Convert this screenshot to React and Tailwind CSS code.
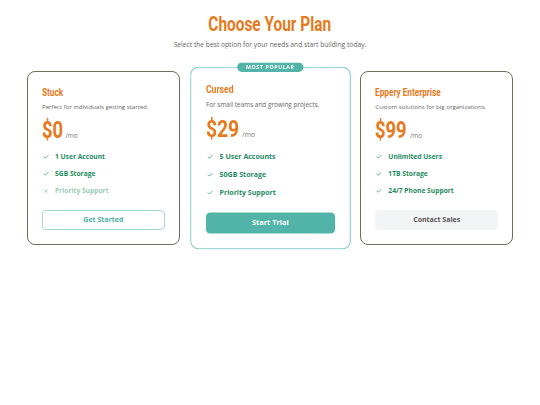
import React from "react";

const cond = { fontFamily: 'Roboto, "Liberation Sans", sans-serif' };

function Check() {
  return (
    <svg width="6" height="6" viewBox="0 0 24 24" fill="none" stroke="#2f9a72" strokeWidth="3" strokeLinecap="round" strokeLinejoin="round" className="shrink-0">
      <path d="M20 6 9 17l-5-5" />
    </svg>
  );
}

function Cross() {
  return (
    <svg width="6" height="6" viewBox="0 0 24 24" fill="none" stroke="#9fc9b8" strokeWidth="3" strokeLinecap="round" className="shrink-0">
      <path d="M18 6 6 18M6 6l12 12" />
    </svg>
  );
}

function Card({ title, desc, price, priceFix, features, button, variant }) {
  const popular = variant === "popular";
  return (
    <div
      className={
        "relative bg-white rounded-[8px] p-[14px] " +
        (popular
          ? "border-[1.5px] border-[#84cbc4] scale-105"
          : "border border-[#75695c]")
      }
    >
      {popular && (
        <div className="absolute left-1/2 -translate-x-1/2 -top-[5px] h-[9px] px-[8px] rounded-full bg-[#52b3a8] text-white text-[5px] font-bold tracking-[0.12em] leading-[9px] whitespace-nowrap">
          MOST POPULAR
        </div>
      )}
      <div
        className="block w-max h-[14px] leading-[14px] origin-left scale-x-[0.75] text-[11px] font-bold text-[#e8791d] whitespace-nowrap"
        style={cond}
      >
        {title}
      </div>
      <div className="mt-[3px] text-[6.1px] leading-[8px] text-[#666] whitespace-nowrap">{desc}</div>
      <div className="mt-[8px] h-[24px] flex items-baseline">
        <span
          className={"block origin-left scale-x-[0.8] text-[23px] leading-[24px] font-bold text-[#e8791d] " + priceFix}
          style={cond}
        >
          {price}
        </span>
        <span className="ml-[3px] text-[6.5px] text-[#777]">/mo</span>
      </div>
      <div className="mt-[9px] flex flex-col gap-[7px]">
        {features.map((f) => (
          <div key={f.t} className="h-[10px] flex items-center gap-[6px] pl-[1px]">
            {f.off ? <Cross /> : <Check />}
            <span
              className={
                "text-[6.7px] leading-[10px] font-bold " +
                (f.off ? "text-[#9ccdb8]" : "text-[#1f8b5e]")
              }
            >
              {f.t}
            </span>
          </div>
        ))}
      </div>
      <div
        className={
          "mt-[14px] h-[20px] rounded-[4px] flex items-center justify-center text-[7px] font-bold " +
          (variant === "outline"
            ? "border border-[#a8d8d2] text-[#4fb0a6]"
            : popular
            ? "bg-[#52b3a8] text-white"
            : "bg-[#f3f4f6] text-[#555]")
        }
      >
        {button}
      </div>
    </div>
  );
}

export default function App() {
  return (
    <div className="w-[540px] h-[405px] bg-white" style={{ fontFamily: '"Open Sans", "Noto Sans", sans-serif' }}>
      <div className="pt-[12px] flex flex-col items-center">
        <h1
          className="h-[24px] leading-[24px] whitespace-nowrap scale-x-[0.77] text-[20px] font-bold text-[#e57a1c]"
          style={cond}
        >
          Choose Your Plan
        </h1>
        <p className="mt-[5px] text-[6.7px] leading-[8px] text-[#666]">
          Select the best option for your needs and start building today.
        </p>
      </div>
      <div className="mt-[22px] w-[486px] mx-auto grid grid-cols-3 gap-[14px] items-start">
        <Card
          variant="outline"
          title="Stuck"
          desc="Perfect for individuals getting started."
          price="$0"
          priceFix="mr-[-6px]"
          features={[{ t: "1 User Account" }, { t: "5GB Storage" }, { t: "Priority Support", off: true }]}
          button="Get Started"
        />
        <Card
          variant="popular"
          title="Cursed"
          desc="For small teams and growing projects."
          price="$29"
          priceFix="mr-[-8px]"
          features={[{ t: "5 User Accounts" }, { t: "50GB Storage" }, { t: "Priority Support" }]}
          button="Start Trial"
        />
        <Card
          variant="gray"
          title="Eppery Enterprise"
          desc="Custom solutions for big organizations."
          price="$99"
          priceFix="mr-[-8px]"
          features={[{ t: "Unlimited Users" }, { t: "1TB Storage" }, { t: "24/7 Phone Support" }]}
          button="Contact Sales"
        />
      </div>
    </div>
  );
}
